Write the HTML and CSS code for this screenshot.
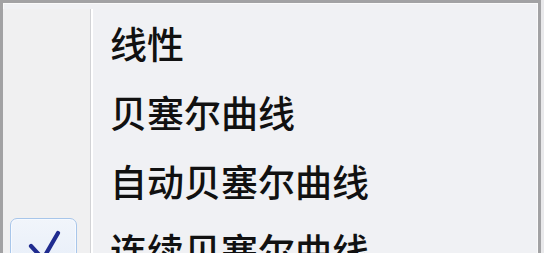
FILE: index.html
```html
<!DOCTYPE html>
<html lang="zh-CN">
<head>
<meta charset="utf-8">
<title>Menu</title>
<link rel="stylesheet" href="styles.css">
</head>
<body>
<div class="menu">
  <div class="item">
    <div class="gutter"></div>
    <div class="label">线性</div>
  </div>
  <div class="item">
    <div class="gutter"></div>
    <div class="label">贝塞尔曲线</div>
  </div>
  <div class="item">
    <div class="gutter"></div>
    <div class="label">自动贝塞尔曲线</div>
  </div>
  <div class="item">
    <div class="gutter">
      <div class="check">
        <svg viewBox="0 0 67 66" width="67" height="66"><path d="M20 27 L32 40 L47 14" fill="none" stroke="#1f2b8f" stroke-width="4.2" stroke-linecap="round" stroke-linejoin="round"/></svg>
      </div>
    </div>
    <div class="label">连续贝塞尔曲线</div>
  </div>
</div>
</body>
</html>
```
FILE: styles.css
```css
html, body {
  margin: 0;
  padding: 0;
  background: #e9e9eb;
  overflow: hidden;
}
.menu {
  width: 535px;
  height: 300px;
  border: 3px solid #a2a2a4;
  border-bottom: none;
  background: #f0f1f4;
  box-shadow: inset 1px 1px 0 #fafafa, inset -1px 0 0 #fafafa;
  padding-top: 6px;
  font-family: "Noto Sans CJK SC", "Noto Sans", sans-serif;
}
.item {
  display: flex;
  height: 69px;
}
.gutter {
  width: 87px;
  flex: none;
  border-right: 1px solid #d2d3d6;
  box-shadow: 2px 0 0 #ffffff;
  background: #f0f0f1;
}
.label {
  padding-left: 19px;
  font-size: 37px;
  font-weight: 500;
  line-height: 69px;
  color: #111111;
  white-space: nowrap;
}
.check {
  margin: 2px 0 0 7px;
  width: 65px;
  height: 64px;
  border: 1px solid #a8c6ea;
  border-radius: 7px;
  background: linear-gradient(#f1f5fb, #e4ecf8);
  box-shadow: inset 0 0 0 1px #f7faff;
}
.check svg {
  display: block;
}
```
